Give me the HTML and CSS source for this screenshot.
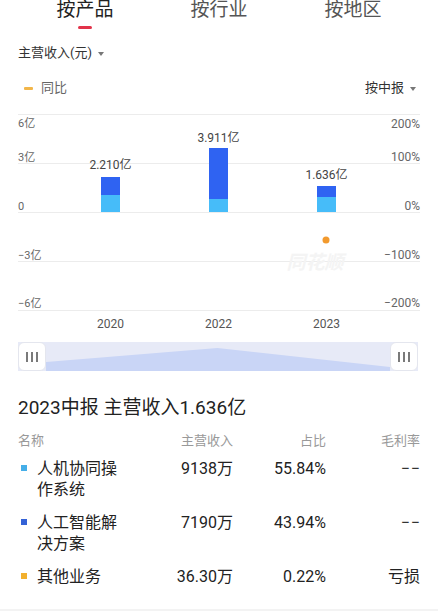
FILE: index.html
```html
<!DOCTYPE html>
<html lang="zh-CN">
<head>
    <meta charset="UTF-8">
    <meta name="viewport" content="width=device-width, initial-scale=1.0">
    <title>主营构成</title>
    <link rel="stylesheet" href="styles.css">
</head>
<body>
    <!-- 顶部分类标签 -->
    <nav class="tabs">
        <div class="tab active">按产品</div>
        <div class="tab">按行业</div>
        <div class="tab">按地区</div>
    </nav>

    <div class="metric">主营收入(元)<span class="caret"></span></div>

    <div class="legend-row">
        <div class="legend"><span class="legend-dash"></span>同比</div>
        <div class="period">按中报<span class="caret"></span></div>
    </div>

    <!-- 柱状图 -->
    <svg class="chart" width="438" height="227" viewBox="0 108 438 227">
        <g class="grid">
            <line x1="18" x2="420" y1="114.5" y2="114.5"></line>
            <line x1="18" x2="420" y1="163.5" y2="163.5"></line>
            <line x1="18" x2="420" y1="212.5" y2="212.5"></line>
            <line x1="18" x2="420" y1="261.5" y2="261.5"></line>
            <line x1="18" x2="420" y1="310.5" y2="310.5"></line>
        </g>
        <g class="axis-left">
            <text x="18" y="127">6亿</text>
            <text x="18" y="161">3亿</text>
            <text x="18" y="210">0</text>
            <text x="18" y="259">−3亿</text>
            <text x="18" y="307">−6亿</text>
        </g>
        <g class="axis-right">
            <text x="420" y="128">200%</text>
            <text x="420" y="161">100%</text>
            <text x="420" y="210">0%</text>
            <text x="420" y="259">−100%</text>
            <text x="420" y="307">−200%</text>
        </g>
        <text class="watermark" x="315" y="269">同花顺</text>
        <g class="bars">
            <rect class="bar-dark" x="101" y="177" width="19" height="18"></rect>
            <rect class="bar-light" x="101" y="195" width="19" height="17"></rect>
            <rect class="bar-dark" x="209" y="148" width="19" height="51"></rect>
            <rect class="bar-light" x="209" y="199" width="19" height="13"></rect>
            <rect class="bar-dark" x="317" y="186" width="19" height="11"></rect>
            <rect class="bar-light" x="317" y="197" width="19" height="15"></rect>
        </g>
        <g class="values">
            <text x="110.5" y="169">2.210亿</text>
            <text x="218.5" y="142">3.911亿</text>
            <text x="326.5" y="179">1.636亿</text>
        </g>
        <circle class="yoy-dot" cx="326" cy="240" r="3.5"></circle>
        <g class="years">
            <text x="110.5" y="328">2020</text>
            <text x="218.5" y="328">2022</text>
            <text x="326.5" y="328">2023</text>
        </g>
    </svg>

    <!-- 区间滑块 -->
    <div class="slider">
        <div class="handle"><span></span><span></span><span></span></div>
        <svg class="track" viewBox="0 0 343 29" preserveAspectRatio="none">
            <polygon points="0,20 171,6 343,25 343,29 0,29"></polygon>
        </svg>
        <div class="handle"><span></span><span></span><span></span></div>
    </div>

    <!-- 明细表 -->
    <section class="summary">
        <h2>2023中报 主营收入1.636亿</h2>
        <div class="table">
            <div class="th">名称</div>
            <div class="th num">主营收入</div>
            <div class="th num">占比</div>
            <div class="th num">毛利率</div>

            <div class="name"><span class="dot light"></span><span class="label">人机协同操作系统</span></div>
            <div class="num">9138万</div>
            <div class="num">55.84%</div>
            <div class="num dash">−−</div>

            <div class="name"><span class="dot blue"></span><span class="label">人工智能解决方案</span></div>
            <div class="num">7190万</div>
            <div class="num">43.94%</div>
            <div class="num dash">−−</div>

            <div class="name"><span class="dot orange"></span><span class="label">其他业务</span></div>
            <div class="num">36.30万</div>
            <div class="num">0.22%</div>
            <div class="num">亏损</div>
        </div>
    </section>

    <div class="footer-band"></div>
</body>
</html>
```

FILE: styles.css
```css
body {
    margin: 0;
    font-family: Roboto, "Noto Sans CJK SC", sans-serif;
    color: #222;
    background-color: #fff;
    overflow: hidden;
}

.tabs {
    display: grid;
    grid-template-columns: repeat(3, 1fr);
    padding: 0 18px;
}

.tab {
    display: flex;
    flex-direction: column;
    align-items: center;
    font-size: 19px;
    line-height: 20px;
    color: #555;
}

.tab.active {
    color: #222;
}

.tab.active::after {
    content: "";
    width: 14px;
    height: 3px;
    margin-top: 6px;
    border-radius: 2px;
    background-color: #e2334a;
}

.caret {
    display: inline-block;
    width: 0;
    height: 0;
    margin-left: 6px;
    vertical-align: middle;
    border-left: 3px solid transparent;
    border-right: 3px solid transparent;
    border-top: 4px solid #777;
}

.metric {
    margin: 15px 0 0 18px;
    font-size: 13px;
    line-height: 18px;
    color: #333;
}

.legend-row {
    display: flex;
    justify-content: space-between;
    align-items: center;
    margin-top: 17px;
    padding: 0 22px 0 24px;
    font-size: 13px;
    line-height: 18px;
}

.legend {
    display: flex;
    align-items: center;
    color: #666;
}

.legend-dash {
    width: 9px;
    height: 3px;
    margin-right: 8px;
    border-radius: 1px;
    background-color: #f2b64a;
}

.period {
    color: #333;
}

.chart {
    display: block;
    margin-top: 11px;
    font-family: Roboto, "Noto Sans CJK SC", sans-serif;
}

.grid line {
    stroke: #ececec;
    stroke-width: 1;
}

.axis-left text {
    font-size: 11px;
    fill: #666;
}

.axis-right text {
    font-size: 12px;
    fill: #666;
    text-anchor: end;
}

.watermark {
    font-size: 19px;
    font-weight: bold;
    font-style: italic;
    fill: #f4f4f4;
    text-anchor: middle;
}

.bar-dark {
    fill: #2f63f2;
}

.bar-light {
    fill: #46bcf9;
}

.values text {
    font-size: 12px;
    fill: #444;
    text-anchor: middle;
}

.yoy-dot {
    fill: #f29a2e;
}

.years text {
    font-size: 12px;
    fill: #555;
    text-anchor: middle;
}

.slider {
    display: flex;
    height: 29px;
    margin: 7px 20px 0 18px;
    background-color: #e7eaf7;
}

.handle {
    display: flex;
    justify-content: center;
    align-items: center;
    gap: 3px;
    width: 28px;
    flex-shrink: 0;
    background-color: #fff;
    border: 1px solid #e4e6ee;
    border-radius: 6px;
    box-sizing: border-box;
}

.handle span {
    width: 2px;
    height: 10px;
    background-color: #7a7a7a;
}

.track {
    flex: 1;
    height: 29px;
}

.track polygon {
    fill: #c9d5f6;
}

.summary {
    padding: 0 18px;
    margin-top: 25px;
}

.summary h2 {
    margin: 0;
    font-size: 19px;
    line-height: 24px;
    font-weight: normal;
    color: #222;
}

.table {
    display: grid;
    grid-template-columns: 118px 97px 93px 94px;
    row-gap: 12px;
    margin-top: 12px;
    font-size: 16px;
    line-height: 21px;
}

.th {
    margin-bottom: -4px;
    font-size: 13px;
    line-height: 18px;
    color: #999;
}

.num {
    text-align: right;
}

.dash {
    letter-spacing: 1px;
    margin-right: -1px;
    color: #333;
}

.name {
    display: flex;
    align-items: flex-start;
}

.label {
    width: 82px;
}

.dot {
    width: 6px;
    height: 6px;
    flex-shrink: 0;
    margin: 7px 10px 0 3px;
}

.dot.light {
    background-color: #45aee8;
}

.dot.blue {
    background-color: #3462d6;
}

.dot.orange {
    background-color: #f2b02e;
}

.footer-band {
    height: 10px;
    margin-top: 22px;
    background-color: #f3f3f3;
}
```
